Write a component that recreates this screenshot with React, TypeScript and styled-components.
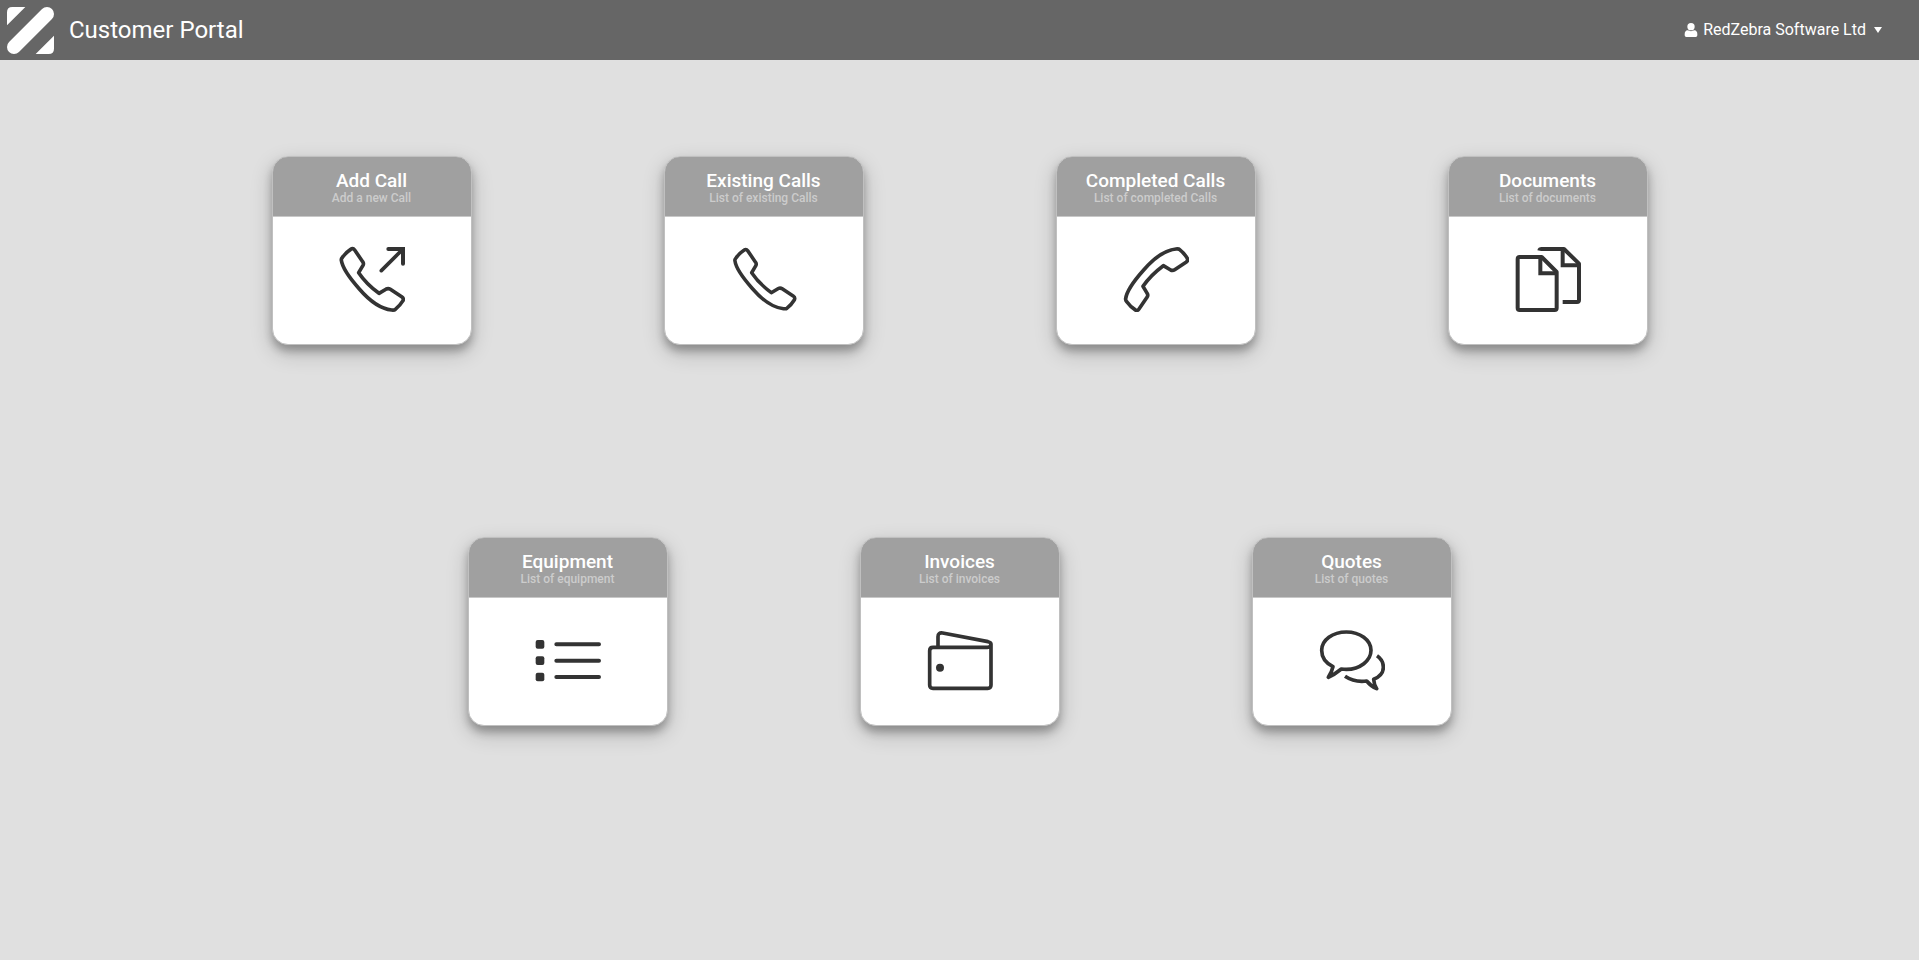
import React from "react";
import styled, { createGlobalStyle } from "styled-components";

const GlobalStyle = createGlobalStyle`
  *, *::before, *::after { box-sizing: border-box; }
  body {
    margin: 0;
    background: #e0e0e0;
    font-family: Roboto, "Liberation Sans", sans-serif;
  }
`;

const TopBar = styled.header`
  display: flex;
  align-items: center;
  justify-content: space-between;
  height: 60px;
  padding: 0 37px 0 7px;
  background: #666;
  color: #fff;
`;

const Brand = styled.a`
  display: flex;
  align-items: center;
  gap: 14px;
  color: inherit;
  text-decoration: none;
`;

const BrandTitle = styled.h1`
  margin: 0;
  font-size: 24px;
  font-weight: 400;
  line-height: 32px;
`;

const AccountButton = styled.button`
  display: flex;
  align-items: center;
  padding: 0;
  border: 0;
  background: none;
  color: inherit;
  font: 400 16px/20px Roboto, "Liberation Sans", sans-serif;
  cursor: pointer;
`;

const AccountName = styled.span`
  margin: 0 8px 0 5px;
`;

const Tiles = styled.main`
  display: flex;
  flex-wrap: wrap;
  justify-content: center;
`;

const Tile = styled.a`
  display: flex;
  flex-direction: column;
  width: 200px;
  margin: 96px;
  border: 1px solid #c0c0c0;
  border-radius: 16px;
  overflow: hidden;
  background: #fff;
  color: #333;
  text-decoration: none;
  box-shadow: 0 6px 8px 0 rgba(0, 0, 0, 0.26), 0 8px 22px 0 rgba(0, 0, 0, 0.2);
`;

const TileHeader = styled.div`
  height: 60px;
  padding-top: 14px;
  border-bottom: 1px solid #c8c8c8;
  background: #a0a0a0;
  text-align: center;
  font-weight: 500;
`;

const TileTitle = styled.h2`
  margin: 0;
  color: #fff;
  font-size: 19px;
  font-weight: inherit;
  line-height: 20px;
`;

const TileSubtitle = styled.p`
  margin: 0;
  color: #ccc;
  font-size: 12px;
  line-height: 14px;
`;

const TileBody = styled.div`
  display: flex;
  justify-content: center;
  height: 127px;
  padding-top: 29px;
`;

const Glyph = styled.svg`
  width: 66px;
  height: 66px;
  fill: none;
  stroke: currentColor;
  stroke-width: 11;
  stroke-linejoin: round;
`;

const Handset = ({ transform }: { transform?: string }) => (
  <path
    transform={transform}
    d="M6 42 Q5 38 10 32 Q20 18 34 9 Q41 4 46 11 L70 46 Q74 51 71 57 L58 79 Q80 112 119 141 L141 128 Q147 125 153 129 L187 151 Q194 156 191 163 Q182 178 168 189 Q165 192 157 191 Q110 186 60 128 Q10 72 6 42Z"
  />
);

const glyphs = {
  addCall: (
    <>
      <Handset />
      <path strokeLinecap="round" d="M126 73 L190 9" />
      <path strokeLinecap="round" strokeLinejoin="miter" d="M147 8 H191 V52" strokeWidth="12" />
    </>
  ),
  call: <Handset transform="translate(5 3) scale(.965)" />,
  hangUp: <Handset transform="translate(1 199) scale(1 -1)" />,
  documents: (
    <g strokeWidth="12">
      <path d="M79 32 H13 Q7 32 7 38 V185 Q7 191 13 191 H118 Q124 191 124 185 V77Z" />
      <path strokeLinejoin="miter" d="M75 32 V81 H124" />
      <path d="M72 13 Q73 8 79 8 H146 L191 52 V161 Q191 167 185 167 H142" />
      <path strokeLinejoin="miter" d="M142 8 V57 H191" />
    </g>
  ),
  list: (
    <>
      <g fill="currentColor" stroke="none">
        <rect x="1" y="38" width="26" height="26" rx="6" />
        <rect x="1" y="87" width="26" height="26" rx="6" />
        <rect x="1" y="136" width="26" height="26" rx="6" />
      </g>
      <path strokeLinecap="round" strokeWidth="12" d="M63 51 H191 M63 100 H191 M63 149 H191" />
    </>
  ),
  wallet: (
    <>
      <path d="M191 50 Q191 60 180 60 H17 Q7 60 7 70 V173 Q7 183 17 183 H181 Q191 183 191 173 V50 Q191 45 182 43 L46 17 Q32 15 32 28 V58" />
      <circle cx="38" cy="121" r="12" fill="currentColor" stroke="none" />
    </>
  ),
  chat: (
    <>
      <path d="M66 125 C74 126 78 126 81 126 C122 126 155 100 155 69 C155 38 122 14 81 14 C40 14 7 38 7 69 C7 90 20 108 41 118 Q38 133 27 150 Q45 142 66 125Z" />
      <path d="M173 85 C185 93 192 106 192 120 C192 136 181 149 163 156 Q164 172 172 184 Q155 177 142 161 C118 164 95 159 77 147" />
    </>
  ),
};

const tiles: { title: string; subtitle: string; glyph: keyof typeof glyphs }[] = [
  { title: "Add Call", subtitle: "Add a new Call", glyph: "addCall" },
  { title: "Existing Calls", subtitle: "List of existing Calls", glyph: "call" },
  { title: "Completed Calls", subtitle: "List of completed Calls", glyph: "hangUp" },
  { title: "Documents", subtitle: "List of documents", glyph: "documents" },
  { title: "Equipment", subtitle: "List of equipment", glyph: "list" },
  { title: "Invoices", subtitle: "List of invoices", glyph: "wallet" },
  { title: "Quotes", subtitle: "List of quotes", glyph: "chat" },
];

export default function App() {
  return (
    <>
      <GlobalStyle />
      <TopBar>
        <Brand href="#home">
          <svg width="48" height="48" viewBox="0 -3 144 144" fill="#fff" aria-hidden="true">
            <path d="M0 55 V16 Q0 0 16 0 H55Z M86 141 L141 86 V125 Q141 141 125 141Z" />
            <path d="M21 120 L120 21" stroke="#fff" strokeWidth="42" strokeLinecap="round" />
          </svg>
          <BrandTitle>Customer Portal</BrandTitle>
        </Brand>
        <AccountButton type="button" aria-haspopup="menu">
          <svg width="14" height="14" viewBox="-1 1 42 42" fill="currentColor" aria-hidden="true">
            <circle cx="20" cy="12" r="11" />
            <path d="M1 35 Q1 24 10 23 Q20 28 30 23 Q39 24 39 35 V38 Q39 43 34 43 H6 Q1 43 1 38Z" />
          </svg>
          <AccountName>RedZebra Software Ltd</AccountName>
          <svg width="8" height="6" viewBox="0 0 8 6" fill="currentColor" aria-hidden="true">
            <path d="M0 0 H8 L4 6Z" />
          </svg>
        </AccountButton>
      </TopBar>
      <Tiles>
        {tiles.map((tile) => (
          <Tile key={tile.title} href={"#" + tile.glyph}>
            <TileHeader>
              <TileTitle>{tile.title}</TileTitle>
              <TileSubtitle>{tile.subtitle}</TileSubtitle>
            </TileHeader>
            <TileBody>
              <Glyph viewBox="-1 -1 198 198" aria-hidden="true">
                {glyphs[tile.glyph]}
              </Glyph>
            </TileBody>
          </Tile>
        ))}
      </Tiles>
    </>
  );
}
